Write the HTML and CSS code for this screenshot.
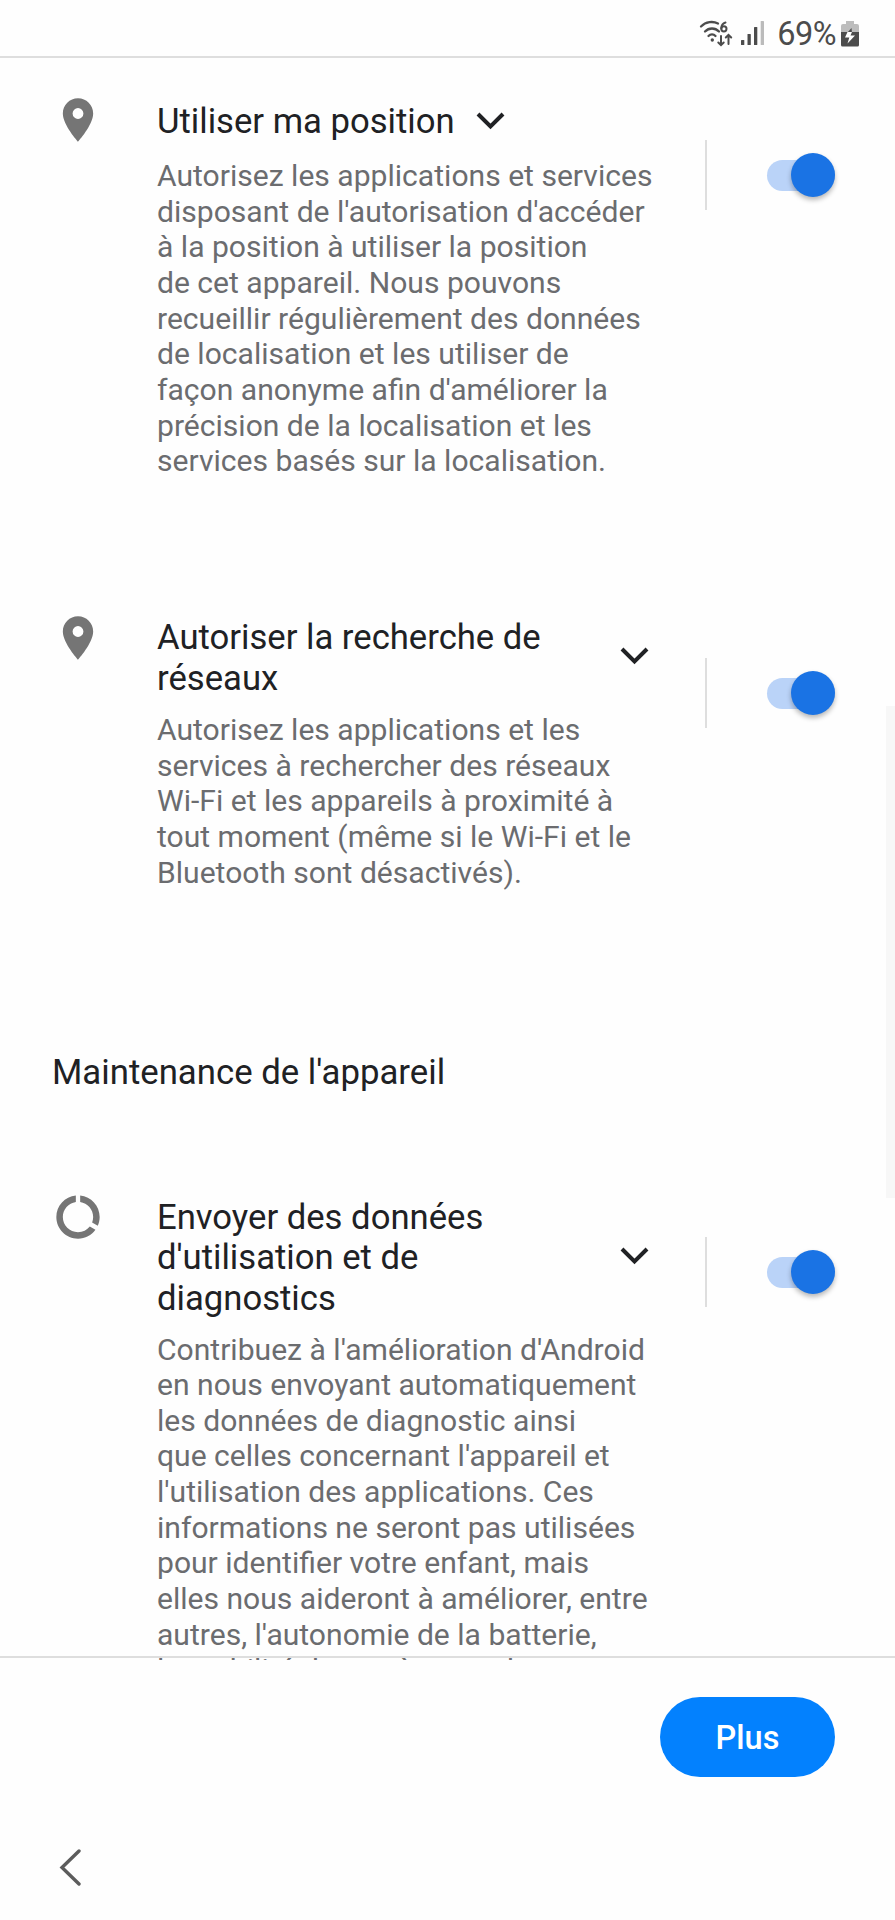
FILE: index.html
```html
<!DOCTYPE html>
<html lang="fr">
<head>
<meta charset="utf-8">
<title>Services Google</title>
<link rel="stylesheet" href="styles.css">
</head>
<body>
<header class="status">
  <svg class="status-wifi" viewBox="0 0 36 28" fill="none" stroke="#4c4c4c" stroke-width="2.3" stroke-linecap="round">
    <path d="M2 6.500C7 1.500 14 1 19 3.500M6 11.500C10 7.500 16 7.500 20 11.500M9.500 16C11.500 13.800 14.500 13.800 16.500 16"/>
    <circle cx="13.300" cy="20" r="1.700" fill="#4c4c4c" stroke="none"/>
    <path stroke-width="2" d="M26.500 2.500C23.500 3.500 22.300 6 22.300 8.500"/><circle cx="24.900" cy="8.800" r="2.600" stroke-width="2"/>
    <path stroke-width="2" d="M22 16v9M19.300 22.500L22 25.200l2.700-2.700M29.500 24v-9M26.800 17.500l2.700-2.700 2.700 2.700"/>
  </svg>
  <svg class="status-signal" viewBox="0 0 24 26" fill="#4c4c4c">
    <rect x="0" y="20" width="3.300" height="5" rx=".6"/><rect x="6.500" y="14" width="3.300" height="11" rx=".6"/><rect x="13" y="7" width="3.300" height="18" rx=".6"/><rect x="19.700" y="1" width="3.300" height="24" rx=".6" fill="#bbb"/>
  </svg>
  <span class="status-pct">69%</span>
  <svg class="status-battery" viewBox="0 0 18 27">
    <path fill="#bdbdbd" d="M5 1h8v3h3q2 0 2 2v8H0V6q0-2 2-2h3z"/>
    <path fill="#4c4c4c" d="M0 12h18v13q0 1.500-1.500 1.500h-15Q0 26.500 0 25z"/>
    <path fill="#4c4c4c" d="M10.500 8L6 13h5z"/><path fill="#fff" d="M6.500 12L4 17.500h4.300L6.500 23.500 14 15.500H9.500L11 12z"/>
  </svg>
</header>
<main class="content">
  <section class="item item-position">
    <svg class="item-icon" viewBox="0 0 24 24"><path d="M12 2C8.130 2 5 5.130 5 9c0 5.250 7 13 7 13s7-7.750 7-13c0-3.870-3.130-7-7-7zm0 9.500a2.500 2.500 0 0 1 0-5 2.500 2.500 0 0 1 0 5z"/></svg>
    <div class="item-body">
      <div class="item-head item-head-short"><h2 class="title">Utiliser ma position</h2><svg class="chevron" viewBox="0 0 29 18"><path d="M2 2l12.500 12.500L27 2"/></svg></div>
      <p class="text">Autorisez les applications et services<br>disposant de l'autorisation d'accéder<br>à la position à utiliser la position<br>de cet appareil. Nous pouvons<br>recueillir régulièrement des données<br>de localisation et les utiliser de<br>façon anonyme afin d'améliorer la<br>précision de la localisation et les<br>services basés sur la localisation.</p>
    </div>
    <div class="item-switch"><span class="switch"><span class="thumb"></span></span></div>
  </section>
  <section class="item item-scan">
    <svg class="item-icon" viewBox="0 0 24 24"><path d="M12 2C8.130 2 5 5.130 5 9c0 5.250 7 13 7 13s7-7.750 7-13c0-3.870-3.130-7-7-7zm0 9.500a2.500 2.500 0 0 1 0-5 2.500 2.500 0 0 1 0 5z"/></svg>
    <div class="item-body">
      <div class="item-head"><h2 class="title">Autoriser la recherche de<br>réseaux</h2><svg class="chevron" viewBox="0 0 29 18"><path d="M2 2l12.500 12.500L27 2"/></svg></div>
      <p class="text">Autorisez les applications et les<br>services à rechercher des réseaux<br>Wi-Fi et les appareils à proximité à<br>tout moment (même si le Wi-Fi et le<br>Bluetooth sont désactivés).</p>
    </div>
    <div class="item-switch"><span class="switch"><span class="thumb"></span></span></div>
  </section>
  <h1 class="section-title">Maintenance de l'appareil</h1>
  <section class="item item-usage">
    <svg class="item-icon" viewBox="0 0 24 24"><path d="M13 2.050v3.030c3.390.49 6 3.390 6 6.920 0 .9-.18 1.750-.48 2.540l2.600 1.530c.56-1.240.88-2.620.88-4.070 0-5.180-3.950-9.450-9-9.950zM12 19c-3.870 0-7-3.130-7-7 0-3.530 2.610-6.430 6-6.920V2.050c-5.060.5-9 4.760-9 9.950 0 5.520 4.470 10 9.990 10 3.310 0 6.240-1.610 8.060-4.090l-2.600-1.530C16.170 17.980 14.210 19 12 19z"/></svg>
    <div class="item-body">
      <div class="item-head"><h2 class="title">Envoyer des données<br>d'utilisation et de<br>diagnostics</h2><svg class="chevron" viewBox="0 0 29 18"><path d="M2 2l12.500 12.500L27 2"/></svg></div>
      <p class="text">Contribuez à l'amélioration d'Android<br>en nous envoyant automatiquement<br>les données de diagnostic ainsi<br>que celles concernant l'appareil et<br>l'utilisation des applications. Ces<br>informations ne seront pas utilisées<br>pour identifier votre enfant, mais<br>elles nous aideront à améliorer, entre<br>autres, l'autonomie de la batterie,<br>la stabilité du système et des</p>
    </div>
    <div class="item-switch"><span class="switch"><span class="thumb"></span></span></div>
  </section>
  <div class="scrollbar"></div>
</main>
<footer class="actions"><button class="more">Plus</button></footer>
<nav class="navbar"><svg class="back" viewBox="0 0 24 38"><path d="M20 2L3 18.500 20 35"/></svg></nav>
</body>
</html>
```

FILE: styles.css
```css
* { box-sizing: border-box; margin: 0; padding: 0; }
body {
  width: 895px; height: 1920px; overflow: hidden;
  display: flex; flex-direction: column;
  background: #fefefe; color: #202124;
  font-family: Roboto, sans-serif;
}
.status {
  height: 58px; flex: none; display: flex; align-items: flex-start;
  padding: 20px 36px 0 0; justify-content: flex-end;
  border-bottom: 2px solid #dedede;
}
.status-wifi { width: 36px; height: 28px; margin-right: 6px; }
.status-signal { width: 24px; height: 26px; margin-right: 12px; }
.status-pct { font-size: 32.5px; line-height: 29px; letter-spacing: -.5px; color: #4c4c4c; margin-right: 5px; }
.status-battery { width: 18px; height: 27px; }
.content { height: 1602px; flex: none; overflow: hidden; position: relative; }
.item { display: flex; align-items: flex-start; }
.item-position { padding-top: 35px; height: 518px; }
.item-scan { padding-top: 35px; height: 462px; }
.item-usage { padding-top: 35px; height: 600px; }
.item-icon { width: 52px; height: 52px; margin: .5px 0 0 52px; flex: none; fill: #757575; }
.item-usage .item-icon { margin-top: 1px; }
.item-body { width: 549px; margin-left: 53px; padding-top: 6px; flex: none; }
.item-position .item-body { padding-top: 7.5px; }
.item-usage .item-body { padding-top: 6.5px; }
.item-head { display: flex; align-items: center; justify-content: space-between; width: 492px; margin-bottom: 14px; }
.item-head-short { justify-content: flex-start; gap: 21px; margin-bottom: 17px; }
.item-usage .item-head { margin-bottom: 13.5px; }
.title { font-size: 34.65px; line-height: 40.5px; font-weight: 400; white-space: nowrap; }
.text { font-size: 30.08px; line-height: 35.65px; color: #6b6c6f; white-space: nowrap; }
.chevron { width: 29px; height: 18px; margin-bottom: 4px; fill: none; stroke: #202124; stroke-width: 4; }
.item-head-short .chevron { margin-bottom: 0; }
.item-usage .chevron { margin-bottom: 2px; }
.item-switch {
  width: 130px; height: 70px; margin-top: 47px; margin-left: -1px; flex: none;
  border-left: 2px solid #dedede;
  display: flex; align-items: center; justify-content: flex-end;
}
.switch { width: 68px; height: 31px; border-radius: 16px; background: #bad3f8; display: flex; align-items: center; justify-content: flex-end; }
.thumb { width: 44px; height: 44px; border-radius: 50%; background: #1a73e4; box-shadow: 0 3px 5px rgba(0,0,0,.28); flex: none; }
.section-title { font-size: 34.75px; line-height: 41px; height: 117px; padding: 14px 0 0 52px; font-weight: 400; }
.scrollbar { position: absolute; right: 0; top: 648px; width: 9px; height: 492px; background: #f7f7f7; }
.actions { height: 142px; flex: none; margin-top: -4px; border-top: 2px solid #dedede; display: flex; justify-content: flex-end; align-items: flex-start; padding: 39px 60px 0 0; position: relative; }
.more { width: 175px; height: 80px; border: 0; border-radius: 40px; background: #0381fe; color: #fff; font: 500 32.5px/82px Roboto, sans-serif; }
.navbar { flex: 1; display: flex; align-items: flex-start; padding: 51px 0 0 59px; }
.back { width: 24px; height: 38px; fill: none; stroke: #5c5c5c; stroke-width: 3.4; stroke-linecap: round; }
```
